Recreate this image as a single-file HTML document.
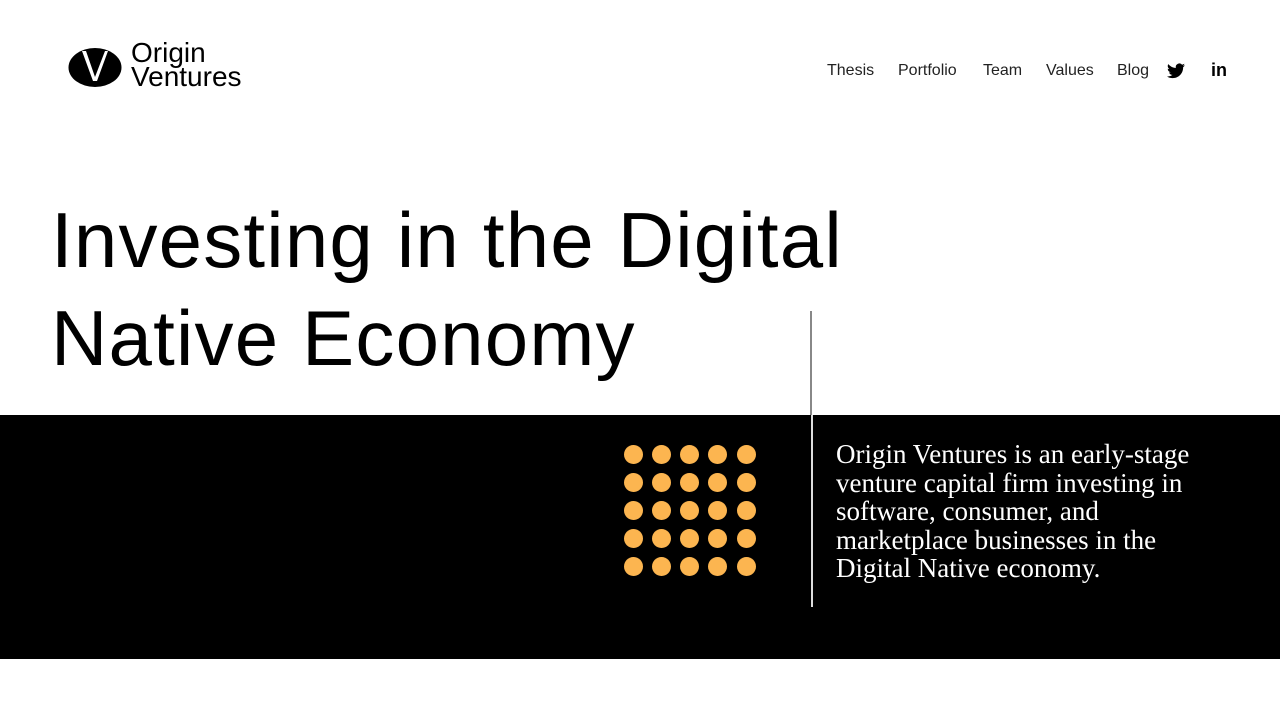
<!DOCTYPE html>
<html><head><meta charset="utf-8"><style>
body{margin:0;width:1280px;height:720px;background:#fff;position:relative;overflow:hidden;font-family:"Liberation Sans",sans-serif}
.nav{position:absolute;top:62px;font-size:16px;color:#222;font-weight:300}
h1{position:absolute;left:51px;top:191px;margin:0;font-weight:normal;font-size:78px;line-height:98px;letter-spacing:1.2px;color:#000}
.band{position:absolute;left:0;top:415px;width:1280px;height:244px;background:#000}
.dot{position:absolute;width:19px;height:19px;border-radius:50%;background:#fcb550}
.p{position:absolute;left:836px;top:440px;width:420px;font-family:"Liberation Serif",serif;font-size:27px;line-height:28.5px;color:#fff;white-space:nowrap}
</style></head><body>
<svg style="position:absolute;left:68px;top:47px" width="54" height="41" viewBox="0 0 54 41"><ellipse cx="27" cy="20.5" rx="26.5" ry="19.5"/><path d="M14 4 L25 34 L29 34 L40 4 L37 4 L27 30 L18 4Z" fill="#fff"/></svg>
<div style="position:absolute;left:131px;top:41px;font-size:28px;line-height:24px;color:#000">Origin<br>Ventures</div>
<div class="nav" style="left:827px">Thesis</div>
<div class="nav" style="left:898px">Portfolio</div>
<div class="nav" style="left:983px">Team</div>
<div class="nav" style="left:1046px">Values</div>
<div class="nav" style="left:1117px">Blog</div>
<svg style="position:absolute;left:1167px;top:63px" width="18" height="16" viewBox="0 0 24 20"><path d="M24 2.4a9.8 9.8 0 0 1-2.8.8A4.9 4.9 0 0 0 23.3.4a9.8 9.8 0 0 1-3.1 1.2A4.9 4.9 0 0 0 11.8 6 14 14 0 0 1 1.7.9a4.9 4.9 0 0 0 1.5 6.6A4.9 4.9 0 0 1 1 6.9a4.9 4.9 0 0 0 3.9 4.8 4.9 4.9 0 0 1-2.2.1 4.9 4.9 0 0 0 4.6 3.4A9.9 9.9 0 0 1 0 17.3 14 14 0 0 0 7.5 19.5c9.1 0 14-7.5 14-14v-.6A10 10 0 0 0 24 2.4z"/></svg>
<div style="position:absolute;left:1211px;top:60px;font-size:18px;font-weight:bold">in</div>
<h1>Investing in the Digital<br>Native Economy</h1>
<div style="position:absolute;left:810px;top:311px;width:2px;height:104px;background:#888"></div>
<div class="band"></div>
<div style="position:absolute;left:811px;top:415px;width:2px;height:192px;background:#ddd"></div>
<div class="dot" style="left:624px;top:445px"></div><div class="dot" style="left:652px;top:445px"></div><div class="dot" style="left:680px;top:445px"></div><div class="dot" style="left:708px;top:445px"></div><div class="dot" style="left:737px;top:445px"></div>
<div class="dot" style="left:624px;top:473px"></div><div class="dot" style="left:652px;top:473px"></div><div class="dot" style="left:680px;top:473px"></div><div class="dot" style="left:708px;top:473px"></div><div class="dot" style="left:737px;top:473px"></div>
<div class="dot" style="left:624px;top:501px"></div><div class="dot" style="left:652px;top:501px"></div><div class="dot" style="left:680px;top:501px"></div><div class="dot" style="left:708px;top:501px"></div><div class="dot" style="left:737px;top:501px"></div>
<div class="dot" style="left:624px;top:529px"></div><div class="dot" style="left:652px;top:529px"></div><div class="dot" style="left:680px;top:529px"></div><div class="dot" style="left:708px;top:529px"></div><div class="dot" style="left:737px;top:529px"></div>
<div class="dot" style="left:624px;top:557px"></div><div class="dot" style="left:652px;top:557px"></div><div class="dot" style="left:680px;top:557px"></div><div class="dot" style="left:708px;top:557px"></div><div class="dot" style="left:737px;top:557px"></div>
<div class="p">Origin Ventures is an early-stage<br>venture capital firm investing in<br>software, consumer, and<br>marketplace businesses in the<br>Digital Native economy.</div>
</body></html>
